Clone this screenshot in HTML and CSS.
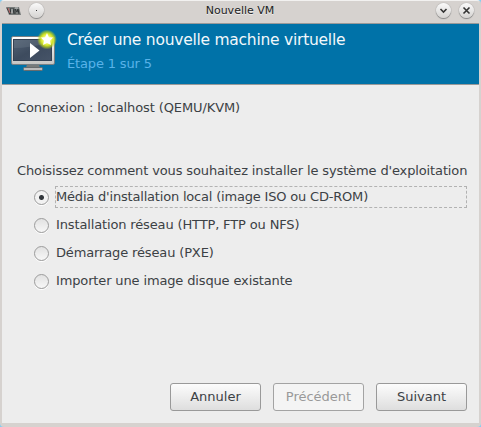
FILE: index.html
```html
<!DOCTYPE html>
<html lang="fr">
<head>
<meta charset="utf-8">
<title>Nouvelle VM</title>
<link rel="stylesheet" href="styles.css">
</head>
<body>
<div class="window">
  <header class="titlebar">
    <svg class="app-icon" width="15" height="9" viewBox="0 0 15 9">
      <path d="M0 0H13L15 8H3Z" fill="#777b7a"/>
      <path d="M1 1l3 6 1-6M7 1l1 6M9 7V2l2 3 1-3 1 5" fill="none" stroke="#303637" stroke-width="1"/>
      <path d="M2 1l2 5" stroke="#b66" stroke-width="1"/>
      <path d="M6 2v4M9 1h3" stroke="#c9cccb" stroke-width="1"/>
    </svg>
    <span class="round"><svg width="15" height="15"><rect x="7" y="7" width="1" height="1" fill="#333"/></svg></span>
    <span class="caption">Nouvelle VM</span>
    <span class="round"><svg width="15" height="15"><path d="M4.500 6L7.500 9L10.500 6" fill="none" stroke="#333" stroke-width="1.600"/></svg></span>
    <span class="round"><svg width="15" height="15"><path d="M4.500 4.500L10.500 10.500M10.500 4.500L4.500 10.500" fill="none" stroke="#333" stroke-width="1.600"/></svg></span>
  </header>
  <section class="banner">
    <svg class="monitor" width="48" height="44" viewBox="0 0 48 44">
      <defs>
        <linearGradient id="screen" x2="1" y2="1"><stop stop-color="#536274"/><stop offset=".5" stop-color="#3d4b5e"/><stop offset="1" stop-color="#465468"/></linearGradient>
        <linearGradient id="frame" x2="0" y2="1"><stop stop-color="#fff"/><stop offset="1" stop-color="#c4c4c2"/></linearGradient>
        <radialGradient id="glow"><stop offset=".35" stop-color="#f4fa70"/><stop offset=".6" stop-color="#d0e228"/><stop offset=".78" stop-color="#bdd51c" stop-opacity=".65"/><stop offset="1" stop-color="#a8c820" stop-opacity="0"/></radialGradient>
      </defs>
      <path d="M17 34H29L30 38H16Z" fill="#777b7b"/>
      <rect x="13.500" y="37.500" width="19" height="3" rx="1" fill="#bbb" stroke="#686c6e"/>
      <rect x="1.500" y="6.500" width="43" height="28" rx="1.500" fill="url(#frame)" stroke="#777f83"/>
      <rect x="3.500" y="9.500" width="38" height="21" fill="url(#screen)" stroke="#344152"/>
      <path d="M4 10H41V12Q20 18 4 18Z" fill="#788391" opacity=".3"/>
      <path d="M20 13L29.500 20.500L20 28Z" fill="#fff"/>
      <circle cx="37" cy="9.500" r="10" fill="url(#glow)"/>
      <path d="M37 3L38.900 7.200L43.300 7.600L40 10.700L41 15.100L37 12.900L33 15.100L34 10.700L30.700 7.600L35.100 7.200Z" fill="#fff"/>
    </svg>
    <div class="heading">
      <h1>Créer une nouvelle machine virtuelle</h1>
      <p>Étape 1 sur 5</p>
    </div>
  </section>
  <main class="content">
    <p class="connection">Connexion : localhost (QEMU/KVM)</p>
    <p class="question">Choisissez comment vous souhaitez installer le système d'exploitation</p>
    <div class="choices">
      <div class="choice"><span class="radio checked"></span><span class="label focused">Média d'installation local (image ISO ou CD-ROM)</span></div>
      <div class="choice"><span class="radio"></span><span class="label">Installation réseau (HTTP, FTP ou NFS)</span></div>
      <div class="choice"><span class="radio"></span><span class="label">Démarrage réseau (PXE)</span></div>
      <div class="choice"><span class="radio"></span><span class="label">Importer une image disque existante</span></div>
    </div>
  </main>
  <footer class="actions">
    <button>Annuler</button>
    <button disabled>Précédent</button>
    <button>Suivant</button>
  </footer>
</div>
</body>
</html>
```
FILE: styles.css
```css
* { box-sizing: border-box; }
body {
  margin: 0;
  background: #86cdf0;
  font: 13px/16px "DejaVu Sans", sans-serif;
  color: #3c4145;
}
p, h1 { margin: 0; font-weight: normal; white-space: nowrap; }
.window {
  width: 481px;
  height: 427px;
  display: flex;
  flex-direction: column;
  border: solid #d6d2cf;
  border-width: 1px 2px 4px;
  border-top-color: #f2f1f0;
  border-radius: 4px;
  background: #ededed;
  overflow: hidden;
}
.titlebar {
  height: 23px;
  flex: none;
  display: flex;
  align-items: center;
  gap: 8px;
  padding: 0 5px 3px 4px;
  background: #d6d2cf;
  border-bottom: 1px solid #999;
}
.app-icon { flex: none; margin-top: 2px; }
.round {
  width: 15px;
  height: 15px;
  flex: none;
  border-radius: 50%;
  background: linear-gradient(#fafafa, #d5d3d1);
  box-shadow: 0 0 1px #777, 0 1px 1px #888;
}
.round svg { display: block; }
.caption {
  flex: 1;
  text-align: center;
  font-size: 11px;
  line-height: 14px;
  color: #222;
  padding-top: 1px;
  text-shadow: 0 1px #eee;
}
.banner {
  height: 61px;
  flex: none;
  display: flex;
  padding: 5px 8px;
  background: #0072a8;
  border-bottom: 1px solid #999;
}
.monitor { margin-top: 1px; flex: none; }
.heading { padding-left: 9px; }
.heading h1 { padding-top: 1px; font-size: 15.5px; line-height: 20px; letter-spacing: -0.25px; color: #f2f8fb; }
.heading p { margin-top: 6px; line-height: 16px; letter-spacing: -0.15px; color: #59b2e8; }
.content { flex: 1; padding: 15px 12px 0 15px; }
.connection { letter-spacing: -0.1px; }
.question { margin-top: 47px; letter-spacing: -0.13px; }
.choices { margin-top: 7px; padding-left: 17px; }
.choice { display: flex; align-items: center; height: 22px; margin-bottom: 6px; }
.radio {
  width: 15px;
  height: 15px;
  flex: none;
  border: 1px solid #9b9b9b;
  border-radius: 50%;
  background: linear-gradient(#e2e2e2, #f7f7f7);
  box-shadow: 0 1px #fff;
}
.checked { background: radial-gradient(circle, #31363b 2px, #f2f2f2 3px); }
.label {
  flex: 1;
  height: 22px;
  margin-left: 6px;
  padding-top: 2px;
  border: 1px solid transparent;
  letter-spacing: -0.14px;
  white-space: nowrap;
}
.focused { border: 1px dashed #b2b2b2; letter-spacing: -0.19px; }
.actions { display: flex; justify-content: flex-end; gap: 12px; padding: 0 12px 12px 0; }
button {
  width: 91px;
  height: 28px;
  padding: 0 0 1px;
  border: 1px solid #999;
  border-radius: 3px;
  background: linear-gradient(#fcfcfc, #dedede);
  font: inherit;
  color: #3c4145;
}
button:disabled { background: #f4f4f4; color: #999; border-color: #a3a3a3; }
```
